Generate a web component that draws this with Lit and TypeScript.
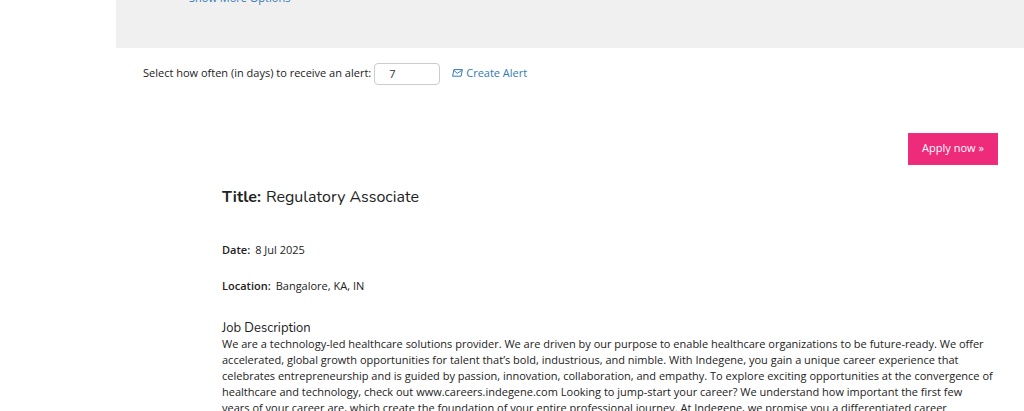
import { LitElement, html, css } from "lit";
import { customElement, state } from "lit/decorators.js";

@customElement("app-root")
class AppRoot extends LitElement {
  static styles = css`
    :host {
      display: block;
      height: 100vh;
      overflow: hidden;
      background: #fff;
      color: #222;
      font-family: "Open Sans", sans-serif;
      font-size: 11px;
      line-height: 16px;
    }
    * {
      box-sizing: border-box;
    }
    a {
      color: #337ab7;
      text-decoration: none;
    }
    .page {
      margin: -10px 0 0 116px;
    }
    .search {
      background: #f0f0f0;
      padding: 0 73px 42px;
    }
    .more {
      display: block;
    }
    .alert {
      display: flex;
      align-items: center;
      padding: 15px 27px 0;
    }
    .alert label,
    .create {
      padding-bottom: 2px;
    }
    .days {
      width: 66px;
      height: 22px;
      margin: 0 12px 0 3px;
      padding: 0 14px 2px;
      border: 1px solid #ccc;
      border-radius: 4px;
      background: #fff;
      color: #333;
      font: inherit;
    }
    .create {
      display: flex;
      align-items: center;
      gap: 3px;
    }
    .actions {
      display: flex;
      justify-content: flex-end;
      padding: 48px 26px 0;
    }
    .apply {
      width: 90px;
      height: 32px;
      padding: 0 0 2px;
      border: 1px solid #f0307f;
      background: #ee2a7b;
      color: #fff;
      font: inherit;
      cursor: pointer;
    }
    .job {
      padding: 0 36px 0 106px;
    }
    h1,
    h2 {
      font-family: Nunito, "Open Sans", sans-serif;
      font-weight: 400;
    }
    h1 {
      margin: 22px 0 0;
      font-size: 16px;
      line-height: 20px;
    }
    .label {
      margin-right: 5px;
      font-weight: 600;
    }
    h1 .label {
      font-weight: 700;
    }
    .facts {
      display: grid;
      gap: 20px;
      margin: 35px 0 27px;
    }
    .fact {
      margin: 0;
    }
    h2 {
      margin: 0;
      font-size: 13px;
      line-height: 15px;
    }
    .text {
      margin: 0;
      white-space: nowrap;
    }
  `;

  @state() private days = "7";

  render() {
    return html`
      <main class="page">
        <section class="search">
          <a class="more" href="#options">Show More Options</a>
        </section>
        <form class="alert" @submit=${(e: Event) => e.preventDefault()}>
          <label for="days">Select how often (in days) to receive an alert:</label>
          <input
            class="days"
            id="days"
            type="text"
            inputmode="numeric"
            .value=${this.days}
            @input=${(e: Event) => (this.days = (e.target as HTMLInputElement).value)}
          />
          <a class="create" href="#alert">
            <svg width="11" height="8" viewBox="0 0 11 8" fill="none" stroke="currentColor" aria-hidden="true">
              <path d="M1.9 .6H10.4L9.1 7.2H.6Z M2 1.4L5.2 4.4L9.8 1.4" stroke-width="1" />
            </svg>
            Create Alert
          </a>
        </form>
        <div class="actions">
          <button class="apply" type="button">Apply now »</button>
        </div>
        <article class="job">
          <h1><span class="label">Title:</span>Regulatory Associate</h1>
          <div class="facts">
            <p class="fact"><span class="label">Date:</span>8 Jul 2025</p>
            <p class="fact"><span class="label">Location:</span>Bangalore, KA, IN</p>
          </div>
          <h2>Job Description</h2>
          <p class="text">
            We are a technology-led healthcare solutions provider. We are driven by our purpose to enable healthcare organizations to be future-ready. We offer<br />
            accelerated, global growth opportunities for talent that’s bold, industrious, and nimble. With Indegene, you gain a unique career experience that<br />
            celebrates entrepreneurship and is guided by passion, innovation, collaboration, and empathy. To explore exciting opportunities at the convergence of<br />
            healthcare and technology, check out www.careers.indegene.com Looking to jump-start your career? We understand how important the first few<br />
            years of your career are, which create the foundation of your entire professional journey. At Indegene, we promise you a differentiated career
          </p>
        </article>
      </main>
    `;
  }
}
